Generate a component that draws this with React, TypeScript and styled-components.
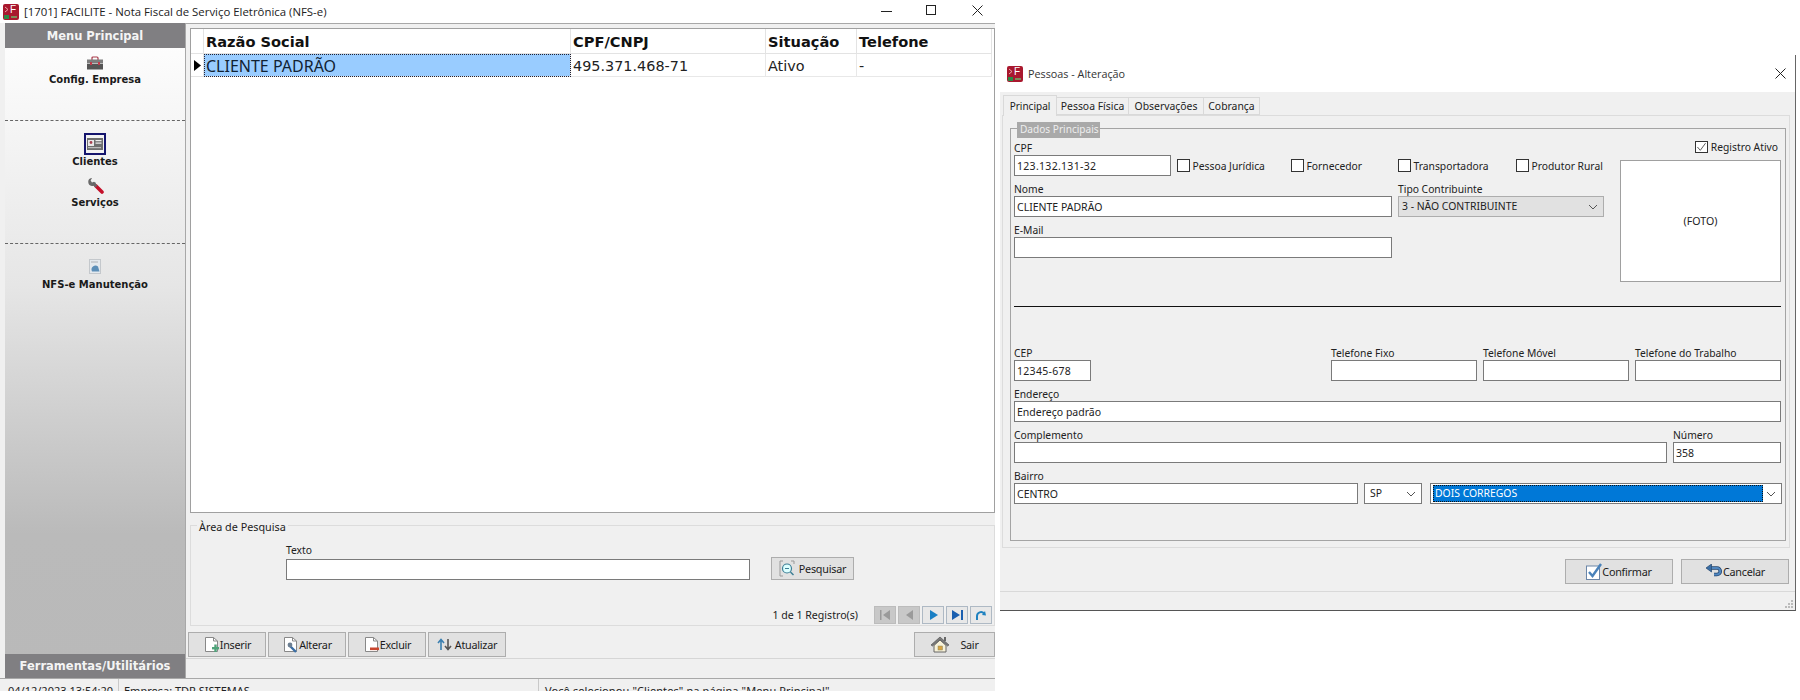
import React from "react";
import styled, { createGlobalStyle } from "styled-components";

const Global = createGlobalStyle`
  html, body { margin: 0; padding: 0; background: #fff; }
  body { font-family: "Noto Sans", "Open Sans", sans-serif; font-size: 11px; color: #111; overflow: hidden; }
  * { box-sizing: border-box; }
`;

const Page = styled.div`display:flex;align-items:flex-start;width:1800px;height:700px;background:#fff;overflow:hidden;`;

/* ---------- main window ---------- */
const MainWindow = styled.div`width:995px;height:691px;display:flex;flex-direction:column;background:#f0f0f0;flex:none;`;
const TitleBar = styled.div`height:23px;background:#fff;display:flex;align-items:center;padding-left:3px;flex:none;`;
const TitleText = styled.span`font-family:"Open Sans","Noto Sans",sans-serif;font-size:11.4px;color:#222;margin-left:5px;line-height:20px;`;
const WinButtons = styled.div<{ $lift?: number }>`margin-left:auto;margin-bottom:${p => p.$lift ?? 0}px;display:flex;align-items:center;`;
const WinBtn = styled.span<{ $w: number }>`width:${p => p.$w}px;display:flex;justify-content:center;`;
const MainBody = styled.div`flex:1;display:flex;min-height:0;`;

const Sidebar = styled.div`margin-left:5px;width:180px;display:flex;flex-direction:column;background:linear-gradient(#fff 0%,#e6e6e6 40%,#bababa 78%,#b9b9b9 100%);flex:none;`;
const SideHead = styled.div<{ $h: number }>`height:${p => p.$h}px;background:#807f82;color:#f4f4f4;font-family:"DejaVu Sans",sans-serif;font-weight:700;font-size:11.5px;display:flex;align-items:center;justify-content:center;flex:none;`;
const SideSection = styled.div<{ $h: number; $top: number; $dash?: boolean }>`height:${p => p.$h}px;padding-top:${p => p.$top}px;display:flex;flex-direction:column;align-items:center;flex:none;${p => p.$dash ? "border-bottom:1px dashed #666;" : ""}`;
const SideSpacer = styled.div`flex:1;`;
const SideItem = styled.div<{ $mt?: number }>`display:flex;flex-direction:column;align-items:center;margin-top:${p => p.$mt ?? 0}px;`;
const SideIcon = styled.div<{ $h: number; $sel?: boolean }>`height:${p => p.$h}px;width:${p => p.$sel ? 22 : 24}px;display:flex;align-items:center;justify-content:center;${p => p.$sel ? "border:2px solid #15156e;" : ""}`;
const SideLabel = styled.div<{ $mt?: number }>`margin-top:${p => p.$mt ?? 0}px;font-family:"DejaVu Sans",sans-serif;font-weight:700;font-size:10px;color:#1a1a1a;line-height:13px;white-space:nowrap;`;

const Content = styled.div`flex:1;display:flex;flex-direction:column;border-left:1px solid #a8a8a8;border-top:1px solid #a8a8a8;padding-top:4px;min-width:0;`;
const Grid = styled.div`margin-left:4px;width:805px;height:485px;background:#fff;border:1px solid #a0a0a0;flex:none;display:grid;grid-template-columns:13px 367px 195px 91px 135px 1fr;grid-template-rows:25px 23px 1fr;`;
const HeadCell = styled.div`font-family:"DejaVu Sans",sans-serif;font-weight:700;font-size:14.6px;color:#111;line-height:26px;padding-left:2px;border-right:1px solid #e3e3e3;border-bottom:1px solid #e3e3e3;white-space:nowrap;overflow:hidden;`;
const IndCell = styled.div`border-right:1px solid #e3e3e3;border-bottom:1px solid #e3e3e3;display:flex;align-items:center;justify-content:center;`;
const DataCell = styled.div<{ $sel?: boolean }>`font-family:"DejaVu Sans",sans-serif;font-size:14.4px;line-height:24px;padding-left:2px;color:#222;white-space:nowrap;overflow:hidden;border-right:1px solid #e8e8e8;border-bottom:1px solid #e8e8e8;${p => p.$sel ? "background:#99ccff;outline:1px dotted #223;outline-offset:-1px;font-family:\"Noto Sans\",sans-serif;font-size:16px;color:#123;" : ""}`;
const GridEnd = styled.div``;
const GridFill = styled.div`grid-column:1 / -1;`;

const SearchBox = styled.div`position:relative;margin:12px 0 0 4px;width:805px;height:101px;border:1px solid #dcdcdc;flex:none;display:flex;flex-direction:column;padding:20px 2px 0 95px;`;
const Legend = styled.span`position:absolute;left:6px;top:-6px;background:#f0f0f0;padding:0 2px;font-size:10.8px;line-height:13px;color:#222;`;
const SearchRow = styled.div`display:flex;align-items:flex-end;`;
const NavRow = styled.div`margin-top:auto;margin-bottom:1px;display:flex;align-items:center;justify-content:flex-end;`;
const RecordCount = styled.span`font-size:10.6px;margin-right:14px;color:#222;`;
const NavBtn = styled.span<{ $off?: boolean }>`width:22px;height:18px;margin-left:2px;display:flex;align-items:center;justify-content:center;border:1px solid ${p => p.$off ? "#bcbcbc" : "#aeb9c4"};background:${p => p.$off ? "#c8c8c8" : "#e8e8e8"};`;

const Bar = styled.div`margin-top:6px;height:26px;flex:none;display:flex;justify-content:space-between;padding-left:2px;`;
const BtnGroup = styled.div`display:flex;gap:2px;`;
const Btn = styled.button<{ $w: number; $h?: number; $gap?: number; $ml?: number }>`width:${p => p.$w}px;height:${p => p.$h ?? 25}px;margin-left:${p => p.$ml ?? 0}px;padding:0;background:#e1e1e1;border:1px solid #adadad;display:flex;align-items:center;justify-content:center;gap:${p => p.$gap ?? 0}px;font-family:"Noto Sans",sans-serif;font-size:10.8px;letter-spacing:-.25px;color:#1c1c1c;flex:none;`;
const BarLine = styled.div`flex:none;height:1px;background:#d6d6d6;`;

const StatusBar = styled.div`height:13px;flex:none;border-top:1px solid #a8a8a8;display:flex;overflow:hidden;background:#f0f0f0;`;
const StatusCell = styled.div<{ $w: number; $pad: number; $last?: boolean }>`width:${p => p.$w}px;padding-left:${p => p.$pad}px;${p => p.$last ? "letter-spacing:.1px;" : "border-right:1px solid #c9c9c9;"}font-size:11px;line-height:15px;padding-top:4px;white-space:nowrap;color:#222;flex:none;`;

/* ---------- dialog ---------- */
const Dialog = styled.div`margin-left:5px;margin-top:55px;width:796px;height:556px;flex:none;display:flex;flex-direction:column;background:#f0f0f0;border-right:1px solid #666;border-bottom:1px solid #555;`;
const DlgTitle = styled.div`height:37px;background:#fff;display:flex;align-items:center;padding:0 9px 0 7px;flex:none;`;
const DlgTitleText = styled.span`font-family:"Open Sans","Noto Sans",sans-serif;font-size:10.8px;color:#333;margin-left:5px;`;
const Tabs = styled.div`margin:3px 0 0 2px;display:flex;align-items:flex-end;height:20px;flex:none;padding-left:1px;`;
const Tab = styled.div<{ $w: number; $active?: boolean }>`width:${p => p.$w}px;height:${p => p.$active ? 21 : 18}px;margin-bottom:${p => p.$active ? -1 : 0}px;position:relative;border:1px solid #d9d9d9;border-bottom:${p => p.$active ? "none" : "1px solid #d9d9d9"};border-left:${p => p.$active ? "1px solid #d9d9d9" : "none"};background:#f0f0f0;display:flex;align-items:center;justify-content:center;font-size:${p => p.$active ? 10 : 10.4}px;color:#222;white-space:nowrap;`;
const TabPanel = styled.div`margin-left:2px;width:788px;height:433px;flex:none;border:1px solid #dcdcdc;padding:12px 3px 6px 7px;`;
const GroupBox = styled.div`position:relative;width:776px;height:413px;border:1px solid #a4a4a4;padding:0 0 0 3px;display:flex;flex-direction:column;`;
const GroupLegend = styled.span`position:absolute;left:6px;top:-7px;height:16px;width:83px;background:#a9a9a9;color:#eee;font-size:10.1px;line-height:15px;padding-left:3px;white-space:nowrap;`;
const TopArea = styled.div`display:flex;padding-top:12px;`;
const LeftCol = styled.div`width:589px;padding-top:1px;display:flex;flex-direction:column;gap:7px;flex:none;`;
const RightCol = styled.div`margin-left:17px;width:161px;display:flex;flex-direction:column;flex:none;`;
const ActiveRow = styled.div`display:flex;justify-content:flex-end;padding-right:3px;height:12px;`;
const FotoBox = styled.div`margin-top:7px;height:122px;background:#fff;border:1px solid #a0a0a0;display:flex;align-items:center;justify-content:center;font-size:10.6px;color:#222;`;
const Divider = styled.div`margin:24px 0 40px;width:767px;height:1px;background:#111;flex:none;`;
const LowerRows = styled.div`display:flex;flex-direction:column;gap:7px;`;
const Row = styled.div`display:flex;align-items:flex-end;height:34px;flex:none;`;
const Field = styled.div<{ $w: number; $ml?: number }>`width:${p => p.$w}px;margin-left:${p => p.$ml ?? 0}px;flex:none;display:flex;flex-direction:column;`;
const Label = styled.label`height:13px;font-size:10.3px;line-height:13px;color:#222;white-space:nowrap;`;
const RaisedLabel = styled(Label)`position:relative;top:-2px;`;
const TextBox = styled.div<{ $spaced?: boolean }>`height:21px;background:#fff;border:1px solid #7a7a7a;font-size:10.5px;line-height:20px;padding-left:2px;letter-spacing:${p => p.$spaced ? ".3px" : "0"};color:#222;white-space:nowrap;overflow:hidden;`;
const Select = styled.div<{ $gray?: boolean; $pad?: number }>`height:21px;background:${p => p.$gray ? "#e1e1e1" : "#fff"};border:1px solid ${p => p.$gray ? "#adadad" : "#7a7a7a"};font-size:10.4px;line-height:19px;padding-left:${p => p.$pad ?? 3}px;display:flex;align-items:center;justify-content:space-between;padding-right:5px;color:#222;white-space:nowrap;`;
const SelectedValue = styled.span`display:block;width:330px;height:17px;margin-left:-1px;background:#0078d7;color:#fff;outline:1px dotted #111;outline-offset:-1px;line-height:17px;padding-left:2px;`;
const Check = styled.div<{ $w?: number }>`width:${p => p.$w ? p.$w + "px" : "auto"};height:21px;display:flex;align-items:center;flex:none;font-size:10.3px;color:#222;white-space:nowrap;`;
const CheckRow = styled.div`display:flex;align-items:flex-end;margin-left:6px;height:34px;`;
const Box = styled.span`width:12.5px;height:12.5px;background:#fff;border:1px solid #333;margin-right:3px;display:inline-flex;align-items:center;justify-content:center;flex:none;`;
const ActiveCheck = styled(Check)`height:12px;`;
const DlgFooter = styled.div`flex:1;display:flex;flex-direction:column;`;
const DlgButtons = styled.div`display:flex;gap:8px;justify-content:flex-end;padding:11px 6px 0 0;height:43px;flex:none;`;
const Grip = styled.div`flex:1;border-top:1px solid #d9d9d9;display:flex;justify-content:flex-end;align-items:flex-end;padding:0 2px 2px 0;`;

/* ---------- drawn icons ---------- */
const Logo = () => (
  <svg width="16" height="16" viewBox="0 0 16 16">
    <rect width="16" height="16" rx="2" fill="#a9182e" />
    <path d="M2 3l3 2.5L2 8" fill="none" stroke="#e9a8a8" strokeWidth="1" />
    <text x="7" y="9" fontFamily="Liberation Sans" fontSize="10" fill="#fff">F</text>
    <rect x="1" y="11" width="5" height="4" fill="#2c8a45" />
    <rect x="8" y="12" width="6" height="2" fill="#7d8c5a" />
  </svg>
);
const Briefcase = () => (
  <svg width="16" height="14" viewBox="0 0 16 14">
    <path d="M5 4V2q0-1 1-1h4q1 0 1 1v2" fill="none" stroke="#a83a4a" strokeWidth="1.2" />
    <rect y="3.5" width="16" height="4" fill="#7d7d7d" />
    <rect y="8" width="16" height="5.5" fill="#555" />
    <rect x="3" y="6" width="2" height="3" fill="#c23a4a" />
    <rect x="11" y="6" width="2" height="3" fill="#c23a4a" />
  </svg>
);
const Card = () => (
  <svg width="16" height="12" viewBox="0 0 16 12">
    <rect width="16" height="12" fill="#6e6e6e" />
    <rect x="1" y="2" width="6" height="6" fill="#e8e8e8" />
    <circle cx="4" cy="4.5" r="1.4" fill="#a84050" />
    <rect x="8.5" y="2" width="6" height="1.2" fill="#eee" />
    <rect x="8.5" y="4.5" width="6" height="1.2" fill="#eee" />
    <rect x="1" y="9" width="13" height="1.2" fill="#bbb" />
  </svg>
);
const Wrench = () => (
  <svg width="17" height="17" viewBox="0 0 17 17">
    <path d="M9 9l6 6" stroke="#c4102a" strokeWidth="3.6" strokeLinecap="round" />
    <path d="M4.5 1a4 4 0 1 0 4.6 5L7 4.8 5 5.4 3.6 3.4 5 1.1z" fill="#6a6a6a" />
    <path d="M6 6.5l3.5 3" stroke="#666" strokeWidth="2.6" />
  </svg>
);
const Doc = () => (
  <svg width="12" height="15" viewBox="0 0 12 15">
    <rect x=".5" y=".5" width="11" height="14" fill="#e4e9ee" stroke="#c4c8cc" />
    <rect x="2" y="2.5" width="7" height="1" fill="#aeb2b6" />
    <path d="M3 12.5a4 4 0 0 1 6-5l1.5 5z" fill="#5d8fb8" />
  </svg>
);
const Pointer = () => <svg width="7" height="11" viewBox="0 0 7 11"><path d="M0 0l7 5.5L0 11z" fill="#000" /></svg>;
const Chevron = () => <svg width="10" height="6" viewBox="0 0 10 6"><path d="M1 1l4 4 4-4" fill="none" stroke="#555" strokeWidth="1" /></svg>;
const Page16 = ({ children }: { children?: React.ReactNode }) => (
  <svg width="17" height="17" viewBox="0 0 17 17">
    <path d="M2.5 1.5h8l4 3.5v10.5h-12z" fill="#fff" stroke="#888" />
    <path d="M10.5 1.5v3.5h4" fill="none" stroke="#888" />
    {children}
  </svg>
);
const Search = () => (
  <svg width="17" height="17" viewBox="0 0 17 17">
    <path d="M4 1H1v15h3M12 1h3v3" fill="none" stroke="#999" />
    <circle cx="8" cy="8.5" r="4.5" fill="#dff" stroke="#3d7f96" strokeWidth="1.2" />
    <path d="M6 8.5h4" stroke="#3d7f96" />
    <path d="M11.5 12l3 3" stroke="#3d7f96" strokeWidth="1.5" />
  </svg>
);
const Arrows = () => (
  <svg width="15" height="13" viewBox="0 0 15 13">
    <path d="M4 12V2M1 5l3-3.5L7 5" fill="none" stroke="#3a7fb0" strokeWidth="1.6" />
    <path d="M11 1v10M8 8l3 3.5L14 8" fill="none" stroke="#555" strokeWidth="1.6" />
  </svg>
);
const House = () => (
  <svg width="20" height="17" viewBox="0 0 20 17">
    <path d="M10 1L1 9l1.5 1L10 3.5 17.5 10 19 9z" fill="#7c7c7c" stroke="#444" strokeWidth=".6" />
    <path d="M4 9.5V16h12V9.5L10 4z" fill="#f8f2d8" stroke="#666" />
    <rect x="8" y="10" width="4.5" height="4" fill="#d9a441" stroke="#886" strokeWidth=".5" />
    <rect x="14" y="1" width="2" height="4" fill="#666" />
  </svg>
);
const Tick = () => (
  <svg width="16" height="17" viewBox="0 0 16 17">
    <rect x=".5" y="3" width="13" height="13.5" fill="#fff" stroke="#6b86a8" />
    <path d="M3 9l3.5 4 8.5-12" fill="none" stroke="#4a82ba" strokeWidth="2.4" />
  </svg>
);
const Back = () => (
  <svg width="18" height="15" viewBox="0 0 18 15">
    <path d="M6 4h6a3.2 3.2 0 0 1 0 6.5H9" fill="none" stroke="#24466e" strokeWidth="3.6" />
    <path d="M6 4h6a3.2 3.2 0 0 1 0 6.5H9" fill="none" stroke="#4f86c0" strokeWidth="2" />
    <path d="M6.5 0L1 4l5.5 4z" fill="#3a6ea5" stroke="#24466e" strokeWidth=".7" />
  </svg>
);
const Nav = ({ d, c }: { d: string; c: string }) => <svg width="11" height="10" viewBox="0 0 11 10"><path d={d} fill={c} /></svg>;
const Refresh = () => <svg width="12" height="11" viewBox="0 0 12 11"><path d="M2 10V6a4 4 0 0 1 7-2.5" fill="none" stroke="#1f82c0" strokeWidth="2" /><path d="M7 5l4 .5L10 1z" fill="#1f82c0" /></svg>;
const Mark = () => <svg width="11" height="10" viewBox="0 0 11 10"><path d="M1.5 5l3 3.5L10 1" fill="none" stroke="#555" strokeWidth="1" /></svg>;
const GripDots = () => (
  <svg width="8" height="8" viewBox="0 0 8 8" fill="#bbb">
    <rect x="6" y="0" width="2" height="2" /><rect x="3" y="3" width="2" height="2" /><rect x="6" y="3" width="2" height="2" />
    <rect x="0" y="6" width="2" height="2" /><rect x="3" y="6" width="2" height="2" /><rect x="6" y="6" width="2" height="2" />
  </svg>
);

const TextField = ({ w, ml, label, value, spaced }: { w: number; ml?: number; label: string; value?: string; spaced?: boolean }) => (
  <Field $w={w} $ml={ml}><Label>{label}</Label><TextBox $spaced={spaced}>{value}</TextBox></Field>
);

export default function App() {
  return (
    <Page>
      <Global />
      <MainWindow>
        <TitleBar>
          <Logo />
          <TitleText>[1701] FACILITE - Nota Fiscal de Serviço Eletrônica (NFS-e)</TitleText>
          <WinButtons $lift={3}>
            <WinBtn $w={31}><svg width="11" height="11" viewBox="0 0 11 11"><path d="M0 6.5h11" stroke="#222" /></svg></WinBtn>
            <WinBtn $w={57}><svg width="10" height="10" viewBox="0 0 10 10"><rect x=".5" y=".5" width="9" height="9" fill="none" stroke="#222" /></svg></WinBtn>
            <WinBtn $w={36}><svg width="11" height="11" viewBox="0 0 11 11"><path d="M.5.5l10 10M10.5.5l-10 10" stroke="#222" /></svg></WinBtn>
          </WinButtons>
        </TitleBar>
        <MainBody>
          <Sidebar>
            <SideHead $h={25}>Menu Principal</SideHead>
            <SideSection $h={73} $top={7} $dash>
              <SideItem><SideIcon $h={15}><Briefcase /></SideIcon><SideLabel $mt={3}>Config. Empresa</SideLabel></SideItem>
            </SideSection>
            <SideSection $h={123} $top={12} $dash>
              <SideItem><SideIcon $h={22} $sel><Card /></SideIcon><SideLabel>Clientes</SideLabel></SideItem>
              <SideItem $mt={9}><SideIcon $h={17}><Wrench /></SideIcon><SideLabel $mt={2}>Serviços</SideLabel></SideItem>
            </SideSection>
            <SideSection $h={60} $top={15}>
              <SideItem><SideIcon $h={15}><Doc /></SideIcon><SideLabel $mt={4}>NFS-e Manutenção</SideLabel></SideItem>
            </SideSection>
            <SideSpacer />
            <SideHead $h={24}>Ferramentas/Utilitários</SideHead>
          </Sidebar>
          <Content>
            <Grid>
              <IndCell />
              <HeadCell>Razão Social</HeadCell>
              <HeadCell>CPF/CNPJ</HeadCell>
              <HeadCell>Situação</HeadCell>
              <HeadCell>Telefone</HeadCell>
              <GridEnd />
              <IndCell><Pointer /></IndCell>
              <DataCell $sel>CLIENTE PADRÃO</DataCell>
              <DataCell>495.371.468-71</DataCell>
              <DataCell>Ativo</DataCell>
              <DataCell>-</DataCell>
              <GridEnd />
              <GridFill />
            </Grid>
            <SearchBox>
              <Legend>Àrea de Pesquisa</Legend>
              <SearchRow>
                <Field $w={464}><RaisedLabel>Texto</RaisedLabel><TextBox /></Field>
                <Btn $w={83} $h={23} $ml={21} $gap={3}><Search />Pesquisar</Btn>
              </SearchRow>
              <NavRow>
                <RecordCount>1 de 1 Registro(s)</RecordCount>
                <NavBtn $off><Nav d="M0 0h1.5v10H0zM3 5l7-5v10z" c="#9a9a9a" /></NavBtn>
                <NavBtn $off><Nav d="M2 5l7-5v10z" c="#9a9a9a" /></NavBtn>
                <NavBtn><Nav d="M2 0l8 5-8 5z" c="#1a7fc4" /></NavBtn>
                <NavBtn><Nav d="M0 0l8 5-8 5zM9 0h2v10H9z" c="#1a5fb0" /></NavBtn>
                <NavBtn><Refresh /></NavBtn>
              </NavRow>
            </SearchBox>
            <Bar>
              <BtnGroup>
                <Btn $w={78}><Page16><rect x="9" y="11" width="7" height="2.4" fill="#4fa37a" /><rect x="11.3" y="8.5" width="2.4" height="7.5" fill="#4fa37a" /></Page16>Inserir</Btn>
                <Btn $w={78}><Page16><path d="M7 9l7 7" stroke="#3a6ea5" strokeWidth="2.4" /><circle cx="8" cy="9" r="2.4" fill="#6c7f92" /></Page16>Alterar</Btn>
                <Btn $w={78}><Page16><rect x="7" y="11.5" width="9" height="2.6" fill="#c9452e" /></Page16>Excluir</Btn>
                <Btn $w={78} $gap={3}><Arrows />Atualizar</Btn>
              </BtnGroup>
              <Btn $w={81} $gap={10}><House />Sair</Btn>
            </Bar>
            <BarLine />
          </Content>
        </MainBody>
        <StatusBar>
          <StatusCell $w={119} $pad={8}>04/12/2023 13:54:20</StatusCell>
          <StatusCell $w={420} $pad={5}>Empresa: TDR SISTEMAS</StatusCell>
          <StatusCell $w={456} $pad={6} $last>Você selecionou "Clientes" na página "Menu Principal"</StatusCell>
        </StatusBar>
      </MainWindow>

      <Dialog>
        <DlgTitle>
          <Logo />
          <DlgTitleText>Pessoas - Alteração</DlgTitleText>
          <WinButtons><svg width="11" height="11" viewBox="0 0 11 11"><path d="M.5.5l10 10M10.5.5l-10 10" stroke="#222" /></svg></WinButtons>
        </DlgTitle>
        <Tabs>
          <Tab $w={54} $active>Principal</Tab>
          <Tab $w={72}>Pessoa Física</Tab>
          <Tab $w={75}>Observações</Tab>
          <Tab $w={56}>Cobrança</Tab>
        </Tabs>
        <TabPanel>
          <GroupBox>
            <GroupLegend>Dados Principais</GroupLegend>
            <TopArea>
              <LeftCol>
                <Row>
                  <TextField w={157} label="CPF" value="123.132.131-32" spaced />
                  <CheckRow>
                    <Check $w={114}><Box />Pessoa Jurídica</Check>
                    <Check $w={107}><Box />Fornecedor</Check>
                    <Check $w={118}><Box />Transportadora</Check>
                    <Check><Box />Produtor Rural</Check>
                  </CheckRow>
                </Row>
                <Row>
                  <TextField w={378} label="Nome" value="CLIENTE PADRÃO" />
                  <Field $w={206} $ml={6}>
                    <Label>Tipo Contribuinte</Label>
                    <Select $gray>3 - NÃO CONTRIBUINTE<Chevron /></Select>
                  </Field>
                </Row>
                <Row>
                  <TextField w={378} label="E-Mail" />
                </Row>
              </LeftCol>
              <RightCol>
                <ActiveRow><ActiveCheck><Box><Mark /></Box>Registro Ativo</ActiveCheck></ActiveRow>
                <FotoBox>(FOTO)</FotoBox>
              </RightCol>
            </TopArea>
            <Divider />
            <LowerRows>
              <Row>
                <TextField w={77} label="CEP" value="12345-678" spaced />
                <TextField w={146} ml={240} label="Telefone Fixo" />
                <TextField w={146} ml={6} label="Telefone Móvel" />
                <TextField w={146} ml={6} label="Telefone do Trabalho" />
              </Row>
              <Row><TextField w={767} label="Endereço" value="Endereço padrão" /></Row>
              <Row>
                <TextField w={653} label="Complemento" />
                <TextField w={108} ml={6} label="Número" value="358" />
              </Row>
              <Row>
                <TextField w={344} label="Bairro" value="CENTRO" />
                <Field $w={58} $ml={6}><Select $pad={5}>SP<Chevron /></Select></Field>
                <Field $w={352} $ml={8}><Select><SelectedValue>DOIS CORREGOS</SelectedValue><Chevron /></Select></Field>
              </Row>
            </LowerRows>
          </GroupBox>
        </TabPanel>
        <DlgFooter>
          <DlgButtons>
            <Btn $w={108}><Tick />Confirmar</Btn>
            <Btn $w={108}><Back />Cancelar</Btn>
          </DlgButtons>
          <Grip><GripDots /></Grip>
        </DlgFooter>
      </Dialog>
    </Page>
  );
}
